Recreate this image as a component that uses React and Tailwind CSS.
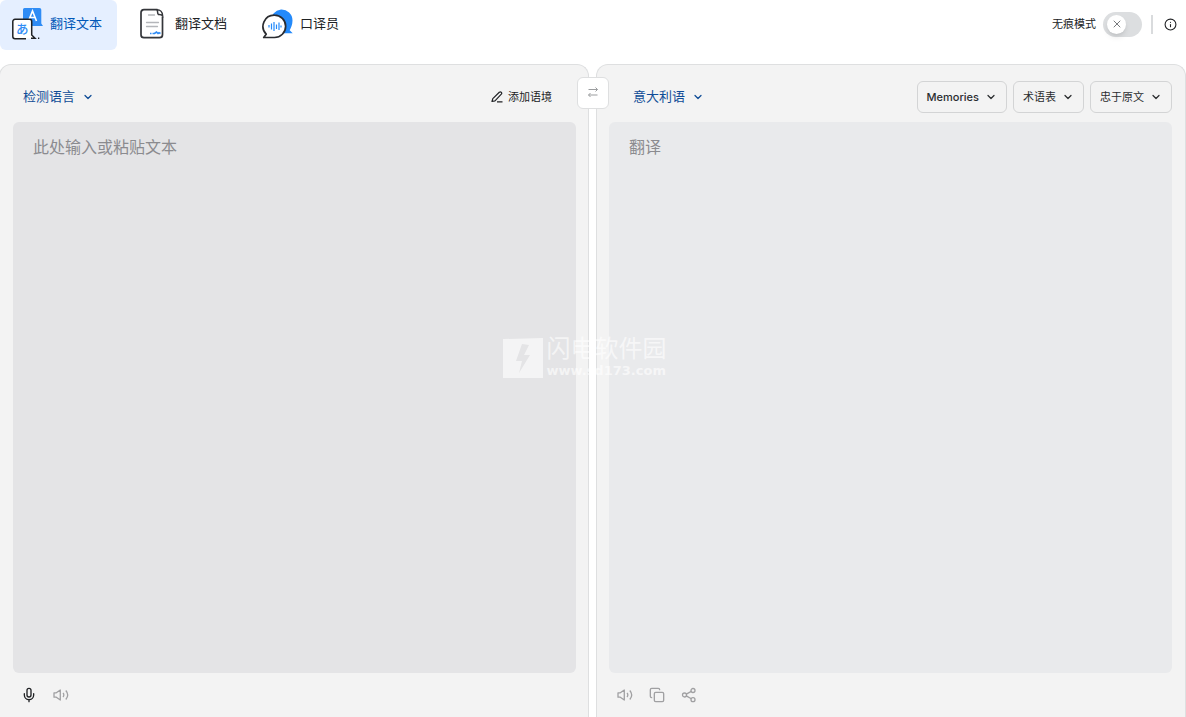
import { useState } from "react"
import { ChevronDown, Copy, Info, Mic, X } from "lucide-react"

const TextIcon = () => (
  <svg className="h-8 w-8 shrink-0" viewBox="0 0 32 32" fill="none" aria-hidden="true">
    <path d="M12.500 0h15a1.800 1.800 0 0 1 1.800 1.800v13.700l1.700 2.500H12.500a1.500 1.500 0 0 1-1.500-1.500v-15A1.500 1.500 0 0 1 12.500 0z" fill="#2f8cf5" />
    <path d="M16.500 13 20.500 3l4 10M18 9.500h5" stroke="#fff" strokeWidth="1.600" />
    <path d="M2.500 11.500h15a2 2 0 0 1 2 2v14l3 3H2.500a2 2 0 0 1-2-2v-15a2 2 0 0 1 2-2z" fill="#fff" />
    <path d="M14 30.700H3a2.200 2.200 0 0 1-2.200-2.200v-15A2.200 2.200 0 0 1 3 11.300h14.500a2.200 2.200 0 0 1 2.200 2.200V27l3.300 3.200h-4M26 30.200h1.300" stroke="#202225" strokeWidth="1.500" />
    <text x="4" y="26" fontSize="12.500" fontWeight="500" fill="#2f8cf5" fontFamily="Noto Sans CJK JP, sans-serif">あ</text>
  </svg>
)

const DocumentIcon = () => (
  <svg className="h-8 w-8 shrink-0" viewBox="0 0 32 32" fill="none" aria-hidden="true">
    <path d="M20.500 1.700H7a3 3 0 0 0-3 3v22a3 3 0 0 0 3 3h15.500a3 3 0 0 0 3-3V8.500" stroke="#34363a" strokeWidth="1.700" />
    <path d="M20 1.700c3 0 5.600 2 5.600 6-1-1.300-2.600-1.300-4.200-1.200-1.500-1.500-.2-3.300-1.400-4.800z" stroke="#34363a" strokeWidth="1.500" />
    <path d="M11.500 7h6M9.500 14.500h12M9.500 18.500h11" stroke="#b4b6ba" strokeWidth="1.300" strokeLinecap="round" />
    <path d="M13 25.500h1.500M15.500 25.500h2l2-1.500 1.500 1.500 1-.7 1.500.7" stroke="#2f8cf5" strokeWidth="1.700" />
  </svg>
)

const InterpreterIcon = () => (
  <svg className="h-8 w-8 shrink-0" viewBox="0 0 32 32" fill="none" aria-hidden="true">
    <path d="M19 1.500a11 11 0 0 1 11.500 11c0 4-1.500 7.500-2.800 9.800l3 3H19A12 12 0 0 1 19 1.500z" fill="#248afa" />
    <path d="M12.500 7.200a11.100 11.100 0 1 1 0 22.300H1.700l2.500-3.300A11.200 11.200 0 0 1 12.500 7.200z" fill="#fff" stroke="#2a2c30" strokeWidth="1.700" strokeLinejoin="round" />
    <path d="M7 17v2.500M9.500 15.500v6M12 14v9M14.500 16.500V21M17 14.500V22M19 17.500v2" stroke="#248afa" strokeWidth="1.200" />
  </svg>
)

const SpeakerIcon = () => (
  <svg className="h-4 w-4" viewBox="0 0 16 16" fill="none" stroke="currentColor" strokeWidth="1.300" aria-hidden="true">
    <path d="M1 5.800h2.300L7.300 3v10l-4-2.800H1zM10 6a2.800 2.800 0 0 1 0 4M12.800 3.500c2.300 2.700 2.300 6.300 0 9" strokeLinejoin="round" />
  </svg>
)

const ShareIcon = () => (
  <svg className="h-4 w-4" viewBox="0 0 16 16" fill="none" stroke="currentColor" strokeWidth="1.300" aria-hidden="true">
    <circle cx="3.500" cy="8" r="2" />
    <circle cx="12" cy="3.500" r="2" />
    <circle cx="12" cy="12.700" r="2" />
    <path d="m5.300 7.100 5-2.700M5.300 8.900l5 2.900" />
  </svg>
)

const PenIcon = () => (
  <svg className="h-3 w-3" viewBox="0 0 12 12" fill="none" stroke="currentColor" strokeWidth="1.200" strokeLinejoin="round" aria-hidden="true">
    <path d="M1 10.500 1.800 7.600 8.300 1.300a1.300 1.300 0 0 1 2 1.800L4 9.800zM6 10.800h5.500" />
  </svg>
)

const SwapIcon = () => (
  <svg className="mb-0.5 h-3 w-3" viewBox="0 0 12 12" fill="none" stroke="currentColor" aria-hidden="true">
    <path d="M1.500 3.500h9M8.500 1.500l2 2-2 2M10.500 9h-9M3.500 7l-2 2 2 2" />
  </svg>
)

const tabs = [
  { id: "text", label: "翻译文本", Icon: TextIcon },
  { id: "document", label: "翻译文档", Icon: DocumentIcon },
  { id: "interpreter", label: "口译员", Icon: InterpreterIcon },
]

const LanguageButton = ({ children }) => (
  <button type="button" className="flex h-8 items-center gap-[7px] pb-px text-[13px] text-[#0f4c97]">
    {children}
    <ChevronDown className="h-3 w-3" strokeWidth={2.5} />
  </button>
)

const OptionButton = ({ className = "", children }) => (
  <button
    type="button"
    className={`flex h-8 items-center gap-1.5 rounded-md border border-[#d3d4d5] px-[9px] text-[11px] text-[#2b2d30] ${className}`}
  >
    {children}
    <ChevronDown className="h-3 w-3" strokeWidth={2.5} />
  </button>
)

const IconButton = ({ label, className = "text-[#a0a0a2]", children }) => (
  <button type="button" aria-label={label} className={`flex h-8 w-8 items-center justify-center ${className}`}>
    {children}
  </button>
)

const Watermark = () => (
  <div className="pointer-events-none absolute top-[273px] left-1/2 flex -translate-x-[90px] items-center gap-1 text-white/60">
    <svg className="h-10 w-10" viewBox="0 0 40 40" aria-hidden="true">
      <path d="M0 1 40 0v40H0zM19 6l-6 17h6l-3 12 11-18h-6l5-10z" fill="currentColor" fillRule="evenodd" />
    </svg>
    <div>
      <div className="text-[24px] leading-6">闪电软件园</div>
      <div className="mt-0.5 font-['DejaVu_Sans',sans-serif] text-[13px] leading-4 font-bold">www.sd173.com</div>
    </div>
  </div>
)

export default function App() {
  const [activeTab, setActiveTab] = useState("text")
  const [text, setText] = useState("")

  return (
    <div className="flex min-h-screen flex-col overflow-x-hidden bg-white font-['Inter','Noto_Sans_CJK_SC',sans-serif] text-[#202225]">
      <header className="flex items-center justify-between">
        <nav className="flex gap-2">
          {tabs.map(({ id, label, Icon }) => (
            <button
              key={id}
              type="button"
              onClick={() => setActiveTab(id)}
              className={`flex h-[50px] items-center gap-1.5 rounded-md pr-[15px] pb-0.5 pl-3 text-[13px] ${
                activeTab === id ? "bg-[#e5efff] text-[#0058b8]" : ""
              }`}
            >
              <Icon />
              {label}
            </button>
          ))}
        </nav>
        <div className="flex items-center pr-[9px] pb-0.5">
          <label className="flex items-center gap-[7px] text-[11px]">
            无痕模式
            <span className="relative flex h-[25px] w-[39px] items-center rounded-full bg-[#dcdee0] px-1">
              <input type="checkbox" className="peer sr-only" />
              <span className="flex h-[19px] w-[19px] items-center justify-center rounded-full bg-white text-[#77797c] shadow-md peer-checked:ml-3">
                <X className="h-3 w-3" strokeWidth={2} />
              </span>
            </span>
          </label>
          <span className="mr-[11px] ml-[9px] h-[19px] w-0.5 bg-[#d9dbdd]" />
          <button type="button" aria-label="信息">
            <Info className="h-[13px] w-[13px]" />
          </button>
        </div>
      </header>

      <main className="relative mt-3.5 -ml-px grid flex-1 grid-cols-2 gap-[7px]">
        <section className="flex flex-col rounded-t-xl border border-b-0 border-[#dedfe0] bg-[#f3f3f3] pt-4 pr-3 pl-[13px]">
          <div className="mb-[9px] flex items-center justify-between pr-6 pl-2.5">
            <LanguageButton>检测语言</LanguageButton>
            <button type="button" className="flex items-center gap-[5px] text-[11px]">
              <PenIcon />
              添加语境
            </button>
          </div>
          <textarea
            aria-label="原文"
            placeholder="此处输入或粘贴文本"
            value={text}
            onChange={(e) => setText(e.target.value)}
            className="flex-1 resize-none rounded-md bg-[#e4e4e6] px-5 py-[13px] text-base outline-none placeholder:text-[#8b8b8f]"
          />
          <div className="flex h-11 items-center">
            <IconButton label="语音输入" className="text-[#202225]">
              <Mic className="h-4 w-4" />
            </IconButton>
            <IconButton label="朗读原文">
              <SpeakerIcon />
            </IconButton>
          </div>
        </section>

        <section className="flex flex-col rounded-t-xl border border-b-0 border-[#dedfe0] bg-[#f3f3f3] pt-4 pr-[13px] pl-3">
          <div className="mb-[9px] flex items-center justify-between pl-6">
            <LanguageButton>意大利语</LanguageButton>
            <div className="flex gap-1.5">
              <OptionButton className="font-medium">Memories</OptionButton>
              <OptionButton>术语表</OptionButton>
              <OptionButton>忠于原文</OptionButton>
            </div>
          </div>
          <textarea
            aria-label="译文"
            placeholder="翻译"
            readOnly
            className="flex-1 resize-none rounded-md bg-[#e9eaec] px-5 py-[13px] text-base outline-none placeholder:text-[#8b8b8f]"
          />
          <div className="flex h-11 items-center">
            <IconButton label="朗读译文">
              <SpeakerIcon />
            </IconButton>
            <IconButton label="复制">
              <Copy className="h-4 w-4" />
            </IconButton>
            <IconButton label="分享">
              <ShareIcon />
            </IconButton>
          </div>
        </section>

        <button
          type="button"
          aria-label="交换语言"
          className="absolute top-[13px] left-1/2 flex h-8 w-8 -translate-x-1/2 items-center justify-center rounded-md border border-[#dedfe0] bg-white text-[#9b9d9f]"
        >
          <SwapIcon />
        </button>
        <Watermark />
      </main>
    </div>
  )
}
